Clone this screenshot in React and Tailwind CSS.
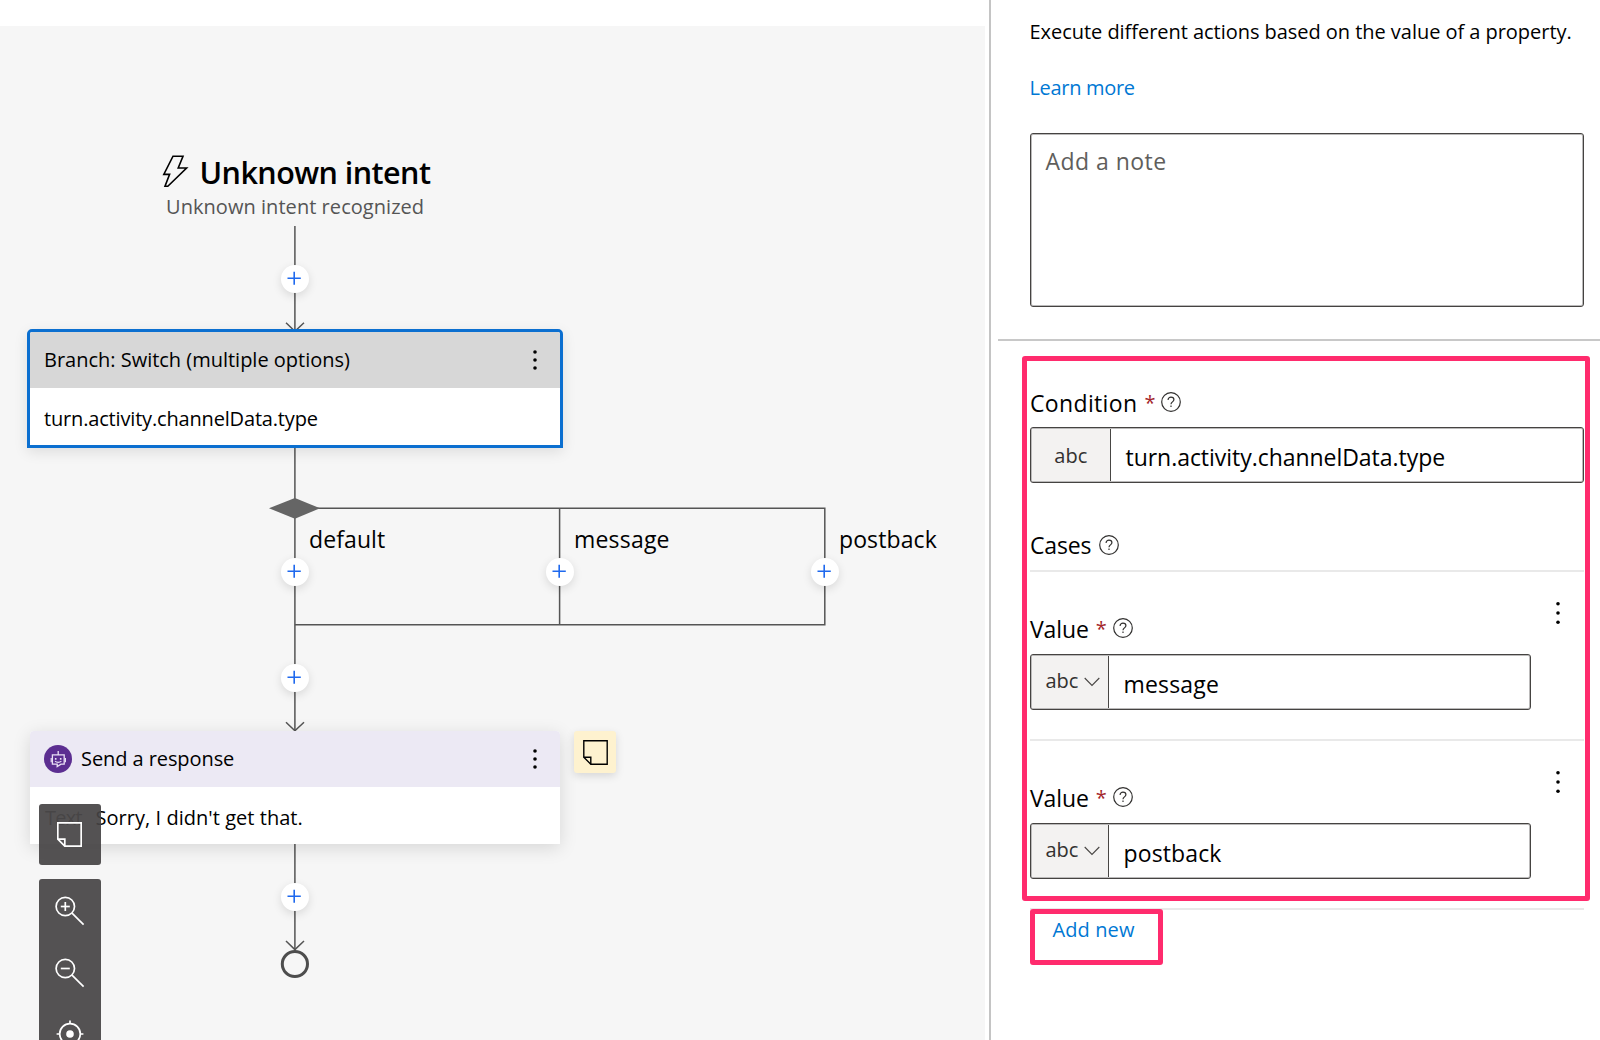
import React from "react";

const ink = "text-[20px] leading-[28px] whitespace-pre";
const inkLarge = "text-[23px] leading-[32px] whitespace-pre";

function Dots({ className, r = 1.8, gap = 8 }) {
  return (
    <svg className={className} width="6" height="26" viewBox="0 0 6 26" fill="#000">
      <circle cx="3" cy={13 - gap} r={r} />
      <circle cx="3" cy="13" r={r} />
      <circle cx="3" cy={13 + gap} r={r} />
    </svg>
  );
}

function AddButton({ x, y }) {
  return (
    <div
      className="absolute flex size-7 items-center justify-center rounded-full bg-white shadow-[0_3px_10px_rgba(0,0,0,0.12)]"
      style={{ left: x - 14, top: y - 14 }}
    >
      <svg width="28" height="28" viewBox="0 0 28 28" stroke="#1f69ee" strokeWidth="1.6">
        <path d="M13.2 6.8V19.8M6.5 13.2H19.8" />
      </svg>
    </div>
  );
}

function NoteIcon({ className, color, width = 1.4 }) {
  return (
    <svg className={className} width="25" height="25" viewBox="0 0 25 25" fill="none" stroke={color} strokeWidth={width}>
      <path d="M.8 .8H24.2V24.2H7.8L.8 17.2Z" />
      <path d="M.8 17.2H7.8V24.2" />
    </svg>
  );
}

function Zoom({ plus }) {
  return (
    <svg width="30" height="30" viewBox="0 0 30 30" fill="none" stroke="#fff" strokeWidth="1.7">
      <circle cx="10.3" cy="10.5" r="9.2" />
      <path d="M17 17.2L28.6 28.6" />
      <path d="M5.8 10.5H14.8" />
      {plus && <path d="M10.3 6V15" />}
    </svg>
  );
}

function Target() {
  return (
    <svg width="28" height="28" viewBox="0 0 28 28" fill="none" stroke="#fff" strokeWidth="1.7">
      <circle cx="14" cy="14" r="10.3" />
      <circle cx="14" cy="14" r="3.8" fill="#fff" stroke="none" />
      <path d="M14 .6V4M14 24V27.4M.6 14H4M24 14H27.4" />
    </svg>
  );
}

function Help() {
  return (
    <svg width="20" height="20" viewBox="0 0 20 20" fill="none" stroke="#323130" strokeWidth="1.2">
      <circle cx="10" cy="10" r="9.3" />
      <path d="M7.1 7.9C7.1 6.1 8.4 5.1 10 5.1S12.9 6.1 12.9 7.7C12.9 9.9 10 9.9 10 12.2" />
      <path d="M10 13.6V15" />
    </svg>
  );
}

function Star() {
  return <span className="ml-[7px] w-[11px] text-[20px] leading-[32px] text-[#a4262c]">*</span>;
}

function Connectors() {
  return (
    <svg className="absolute left-0 top-0" width="985" height="1040" viewBox="0 0 985 1040" fill="none" stroke="#555" strokeWidth="1.5">
      <path d="M294.9 226V331M294.9 448V731M294.9 844V951" />
      <path d="M286 322.7L294.9 331.2L304 322.7M286 722.2L294.9 730.8L304 722.2M286 941L294.9 949.6L304 941" />
      <path d="M294.9 508.2H824.8V624.7H294.9M559.6 508.2V624.7" />
      <path d="M269 508.3L294.9 498L320 508.3L294.9 518.8Z" fill="#656565" stroke="none" />
      <circle cx="294.9" cy="964" r="12.6" stroke="#4d4d4d" strokeWidth="3" />
    </svg>
  );
}

function SwitchCard() {
  return (
    <div className="absolute left-[27px] top-[329px] h-[119px] w-[536px] rounded-t-[5px] border-[3px] border-[#0b6fd0] bg-white shadow-[0_4px_14px_rgba(0,0,0,0.1)]">
      <div className="flex h-[56px] items-center justify-between rounded-t-[2px] bg-[#d7d7d7] pl-[14px] pr-[22px]">
        <span className={`${ink} tracking-[-0.01px]`}>Branch: Switch (multiple options)</span>
        <Dots />
      </div>
      <div className="flex h-[57px] items-center pl-[14px] pt-[5px]">
        <span className={`${ink} tracking-[-0.17px]`}>turn.activity.channelData.type</span>
      </div>
    </div>
  );
}

function Robot() {
  return (
    <svg width="28" height="28" viewBox="0 0 28 28" fill="none" stroke="#e9dff5" strokeWidth="1.3">
      <circle cx="14" cy="14" r="14" fill="#5c2e91" stroke="none" />
      <path d="M14.2 6V9.6M8.4 9.8H20.2V19.2H17L13.2 21.6V19.2H8.4Z" />
      <path d="M7.2 13V17.2M21.4 13V17.2" strokeWidth="1.2" />
      <path d="M10.9 13.9H12.5M15.9 13.9H17.5" strokeWidth="1.6" />
      <path d="M11 16.2C12.6 17.7 15.8 17.7 17.4 16.2" strokeWidth="1.1" />
    </svg>
  );
}

function ResponseCard() {
  return (
    <div className="absolute left-[30px] top-[731px] h-[113px] w-[530px] rounded-t-[4px] bg-white shadow-[0_4px_18px_rgba(0,0,0,0.13)]">
      <div className="flex h-[56px] items-center rounded-t-[4px] bg-[#ece9f4] pl-[14px] pr-[22px]">
        <Robot />
        <span className={`${ink} ml-[9px] tracking-[-0.08px]`}>Send a response</span>
        <Dots className="ml-auto" />
      </div>
      <div className="flex h-[57px] items-center pl-[15px] pt-[5px]">
        <span className={`${ink} w-[50.5px] tracking-[-0.7px] text-[#605e5c]`}>Text</span>
        <span className={`${ink} tracking-[0.04px]`}>Sorry, I didn't get that.</span>
      </div>
    </div>
  );
}

function Canvas() {
  return (
    <div className="relative h-[1040px] w-[985px] shrink-0 overflow-hidden bg-[linear-gradient(#fff_26.5px,#f6f6f6_26.5px)]">
      <Connectors />
      <svg className="absolute left-[162px] top-[154px]" width="28" height="34" viewBox="162 154 28 34" fill="none" stroke="#000" strokeWidth="1.6">
        <path d="M173 156.2H183L178.2 168H186.6L167.8 186.2H165L169.6 174.4H163.8Z" />
      </svg>
      <h1 className="absolute left-[199.5px] top-[150px] whitespace-pre text-[30.5px] leading-[44px] font-semibold tracking-[-0.55px]">Unknown intent</h1>
      <p className={`${ink} absolute left-[166px] top-[193px] tracking-[0.05px] text-[#555]`}>Unknown intent recognized</p>
      <SwitchCard />
      <span className={`${inkLarge} absolute left-[309px] top-[523px] tracking-[0.1px]`}>default</span>
      <span className={`${inkLarge} absolute left-[574px] top-[523px] tracking-[0.2px]`}>message</span>
      <span className={`${inkLarge} absolute left-[839px] top-[523px] tracking-[0.1px]`}>postback</span>
      <AddButton x={295} y={279} />
      <AddButton x={295} y={572} />
      <AddButton x={559.6} y={572} />
      <AddButton x={824.7} y={572} />
      <AddButton x={295} y={678} />
      <AddButton x={295} y={897} />
      <ResponseCard />
      <div className="absolute left-[574px] top-[731px] flex size-[42px] items-center justify-center rounded-[3px] bg-[#fef2cf] shadow-[0_3px_9px_rgba(0,0,0,0.13)]">
        <NoteIcon color="#000" />
      </div>
      <div className="absolute left-[39px] top-[803.5px] flex flex-col gap-[14px]">
        <div className="flex h-[61.5px] w-[61.5px] items-center justify-center rounded-[3px] bg-[#454344]/92">
          <NoteIcon color="#fff" width={1.7} />
        </div>
        <div className="flex h-[200px] w-[61.5px] flex-col items-center rounded-[3px] bg-[#454344]/92 pt-[17px]">
          <Zoom plus />
          <div className="mt-[32px]"><Zoom /></div>
          <div className="mt-[32px] flex"><Target /></div>
        </div>
      </div>
    </div>
  );
}

const box = "rounded-[3px] border border-[#454341] shadow-[inset_0_0_0_1px_rgba(60,58,56,0.35)]";

function Chevron() {
  return (
    <svg className="ml-[6px]" width="16" height="10" viewBox="0 0 16 10" fill="none" stroke="#484644" strokeWidth="1.1">
      <path d="M.7 1L8 8.4L15.3 1" />
    </svg>
  );
}

function CaseItem({ value, tracking }) {
  return (
    <div className="flex h-[169.4px] border-b-2 border-[#e9e9e9]">
      <div className="w-[501px] pt-[41px]">
        <div className="flex h-[32px] items-center">
          <span className={`${inkLarge} tracking-[-0.1px]`}>Value</span>
          <Star />
          <span className="ml-[6px] -mt-px"><Help /></span>
        </div>
        <div className={`${box} mt-[9px] flex h-[56px] w-[501px]`}>
          <div className="m-px mr-0 flex w-[76.5px] items-center border-r-[1.5px] border-[#484644] bg-[#f3f2f1] pl-[13.5px] text-[#323130]">
            <span className={`${ink} -mt-px`}>abc</span>
            <Chevron />
          </div>
          <span className={`${inkLarge} ${tracking} pl-[15px] pt-[13px]`}>{value}</span>
        </div>
      </div>
      <Dots className="ml-[23.5px] mt-[28.5px]" gap={9.2} />
    </div>
  );
}

function Panel() {
  return (
    <div className="ml-[4px] flex h-[1040px] w-[611px] flex-col border-l-2 border-[#c4c4c4] bg-white pt-[18px]">
      <p className={`${ink} ml-[38.5px] tracking-[-0.04px]`}>Execute different actions based on the value of a property.</p>
      <a className={`${ink} ml-[38.5px] mt-[28px] tracking-[-0.32px] text-[#0078d4]`}>Learn more</a>
      <div className={`${box} ml-[39px] mt-[31px] h-[174px] w-[554px] shrink-0 pl-[14.5px] pt-[11px]`}>
        <span className={`${inkLarge} tracking-[0.47px] text-[#605e5c]`}>Add a note</span>
      </div>
      <div className="ml-[7px] mt-[32px] h-[2px] shrink-0 bg-[#c8c8c8]" />
      <div className="relative ml-[39px] w-[554px] pt-[46px]">
        <div className="absolute -left-[8.5px] -right-[6px] top-[15px] h-[545px] rounded-[3px] border-[5px] border-[#ff2b6d]" />
        <div className="flex h-[32px] items-center">
          <span className={`${inkLarge} tracking-[0.35px]`}>Condition</span>
          <Star />
          <span className="ml-[6px] -mt-[2px]"><Help /></span>
        </div>
        <div className={`${box} mt-[8px] flex h-[56px]`}>
          <div className="m-px mr-0 flex w-[78.5px] items-center justify-center border-r border-[#484644] bg-[#f3f2f1] text-[#323130]">
            <span className={`${ink} mt-px`}>abc</span>
          </div>
          <span className={`${inkLarge} pl-[15px] pt-[13px] tracking-[-0.04px]`}>turn.activity.channelData.type</span>
        </div>
        <div className="mt-[46px] flex h-[32px] items-center">
          <span className={`${inkLarge} tracking-[-0.16px]`}>Cases</span>
          <span className="ml-[7.5px]"><Help /></span>
        </div>
        <div className="mt-[8.5px] h-[2px] bg-[#e9e9e9]" />
        <CaseItem value="message" tracking="tracking-[0.18px]" />
        <CaseItem value="postback" tracking="tracking-[0.12px]" />
        <div className="relative -mt-px h-[56px] w-[133px] rounded-[3px] border-[5px] border-[#ff2b6d] bg-white pl-[17.5px] pt-[2px] text-[#0078d4]">
          <span className={`${ink} tracking-[0.1px]`}>Add new</span>
        </div>
      </div>
    </div>
  );
}

export default function App() {
  return (
    <div className="flex h-[1040px] w-[1600px] overflow-hidden bg-white font-['Open_Sans',sans-serif] text-black">
      <Canvas />
      <Panel />
    </div>
  );
}
